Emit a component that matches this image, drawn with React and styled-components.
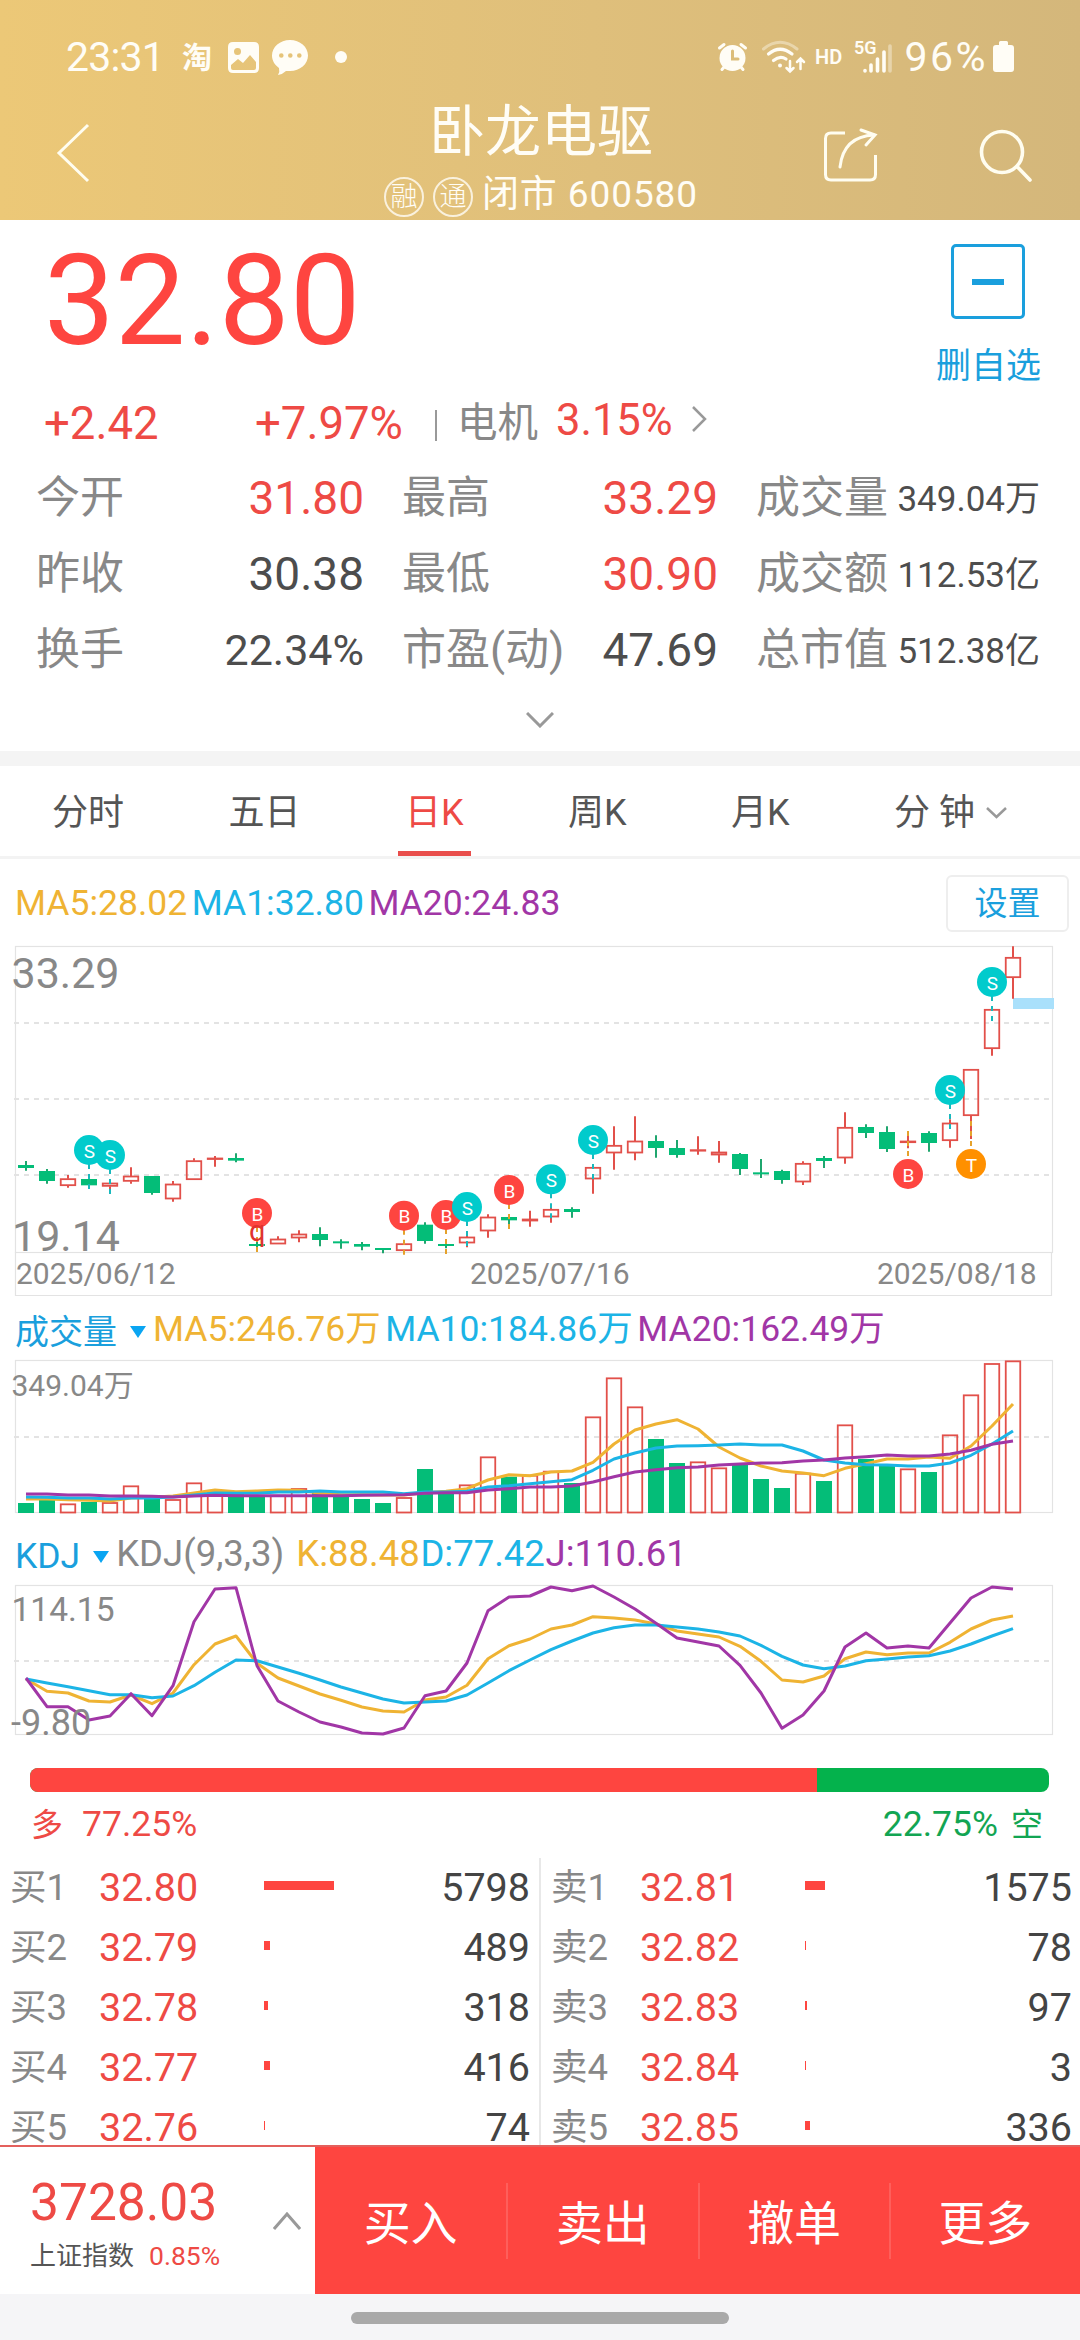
import React, {useState} from 'react';
import styled, {createGlobalStyle} from 'styled-components';

const GlobalStyle = createGlobalStyle`
    * {
        box-sizing: border-box;
    }

    body {
        margin: 0;
        background: #fff;
        font-family: Roboto, "Noto Sans CJK SC", sans-serif;
        line-height: 1;
    }
`;

const RED = '#fe4540';
const TEXT_RED = '#ee4a45';
const GREEN = '#04bd78';
const BLUE = '#1a9fdd';
const YELLOW = '#efb333';
const CYAN = '#1cb4e6';
const PURPLE = '#a136a6';

const Page = styled.div`
    width: 1080px;
    height: 2340px;
    display: flex;
    flex-direction: column;
    overflow: hidden;
    background: #fff;
    white-space: nowrap;
`;

/* header */

const Header = styled.header`
    height: 220px;
    flex: none;
    padding-top: 25px;
    color: #fffdf6;
    background: linear-gradient(90deg, #ecc877 0%, #dfbf7b 55%, #d4b77b 100%);
`;

const StatusBar = styled.div`
    height: 64px;
    display: flex;
    align-items: center;
    justify-content: space-between;
    padding: 0 66px 0 66px;
`;

const StatusGroup = styled.div`
    display: flex;
    align-items: center;
`;

const StatusText = styled.span`
    margin-right: ${props => props.$gap || 0}px;
    font-family: Roboto, sans-serif;
    font-size: 41px;
    letter-spacing: ${props => props.$spacing || 0}px;
`;

const AppMark = styled.span`
    width: 45px;
    padding: 2px 0 0 1px;
    font-size: 30px;
    font-weight: 700;
`;

const NavBar = styled.div`
    height: 131px;
    display: grid;
    grid-template-columns: 320px 440px 320px;
    align-items: center;
`;

const BackButton = styled.div`
    padding-left: 54px;
`;

const NavActions = styled.div`
    display: flex;
    align-items: center;
    gap: 101px;
    padding-left: 62px;
`;

const TitleBox = styled.div`
    height: 131px;
    display: flex;
    flex-direction: column;
    align-items: center;
    padding: 15px 0 0 2px;
`;

const StockName = styled.div`
    font-size: 56px;
`;

const StockStatus = styled.div`
    display: flex;
    align-items: center;
    margin-top: 11px;
    font-size: 37px;
    letter-spacing: 0.9px;
`;

const RoundTag = styled.span`
    width: 40px;
    height: 40px;
    display: flex;
    align-items: center;
    justify-content: center;
    margin: 6px 9px 0 0;
    border: 2px solid rgba(255, 253, 246, 0.8);
    border-radius: 50%;
    font-size: 27px;
    font-weight: 300;
    letter-spacing: 0;
`;

/* quote */

const Quote = styled.section`
    height: 531px;
    flex: none;
`;

const QuoteTop = styled.div`
    height: 175px;
    display: flex;
    justify-content: space-between;
    padding: 18px 39px 0 44px;
`;

const Price = styled.div`
    font-size: 126px;
    line-height: 127px;
    color: ${RED};
`;

const Watch = styled.div`
    display: flex;
    flex-direction: column;
    align-items: center;
    padding-top: 6px;
    font-size: 35px;
    color: ${BLUE};
`;

const WatchIcon = styled.div`
    width: 74px;
    height: 75px;
    display: flex;
    align-items: center;
    justify-content: center;
    margin-bottom: 30px;
    border: 3px solid ${BLUE};
    border-radius: 5px;

    &::after {
        content: "";
        width: 32px;
        height: 6px;
        background: ${BLUE};
    }
`;

const ChangeRow = styled.div`
    height: 57px;
    display: flex;
    align-items: center;
    padding-left: 44px;
    color: ${TEXT_RED};
`;

const ChangeValue = styled.span`
    width: ${props => props.$width}px;
    font-size: 45.5px;
`;

const Sector = styled.div`
    display: flex;
    align-items: center;
    color: #888;

    &::before {
        content: "";
        width: 2px;
        height: 31px;
        margin: 3px 20px 0 0;
        background: #999;
    }
`;

const SectorName = styled.span`
    font-size: 40.5px;
`;

const SectorChange = styled.span`
    margin: -6px 18px 0 18px;
    font-size: 43.5px;
    color: ${TEXT_RED};
`;

const SectorArrow = styled.span`
    height: 26px;
    margin-top: -10px;
`;

const StatGrid = styled.div`
    display: grid;
    grid-template-columns: 328px 316px 284px;
    grid-auto-rows: 76px;
    column-gap: 38px;
    padding: 8px 0 0 36px;
`;

const Stat = styled.div`
    display: flex;
    align-items: center;
    justify-content: space-between;
`;

const StatLabel = styled.span`
    font-size: 44px;
    color: #888;
`;

const StatValue = styled.span`
    padding-top: ${props => props.$small ? 3 : 0}px;
    font-size: ${props => props.$size || 46}px;
    color: ${props => props.$up ? TEXT_RED : '#4d4d4d'};
`;

const Expand = styled.div`
    display: flex;
    justify-content: center;
    padding-top: 24px;
`;

const Band = styled.div`
    height: 15px;
    flex: none;
    background: #f4f4f4;
`;

/* period tabs */

const Tabs = styled.nav`
    height: 93px;
    flex: none;
    display: flex;
    justify-content: space-between;
    padding: 0 73px 0 52px;
    border-bottom: 3px solid #f3f3f3;
`;

const Tab = styled.div`
    display: flex;
    align-items: center;
    gap: 11px;
    margin: 0 -7px;
    padding: 9px 7px 0;
    font-size: 36px;
    color: ${props => props.$active ? TEXT_RED : '#555'};
    border-bottom: 5px solid ${props => props.$active ? '#e94e4c' : 'transparent'};
`;

/* charts */

const LegendRow = styled.div`
    height: ${props => props.$height}px;
    flex: none;
    display: flex;
    align-items: center;
    padding: ${props => props.$top || 0}px 11px 0 15px;
    font-size: ${props => props.$size || 35.5}px;
`;

const Legend = styled.span`
    margin-right: ${props => props.$gap}px;
    color: ${props => props.$color};
`;

const SettingButton = styled.button`
    width: 123px;
    height: 57px;
    margin-left: auto;
    padding: 0;
    border: 2px solid #eee;
    border-radius: 6px;
    background: #fff;
    font: inherit;
    font-size: 33px;
    color: ${BLUE};
`;

const IndicatorName = styled.span`
    display: flex;
    align-items: center;
    gap: 13px;
    padding-top: ${props => props.$top}px;
    margin-right: 7px;
    font-size: ${props => props.$size}px;
    color: ${BLUE};
`;

const ChartSvg = styled.svg`
    display: block;
    flex: none;
    font-family: Roboto, "Noto Sans CJK SC", sans-serif;
`;

/* long / short ratio */

const RatioBar = styled.div`
    height: 24px;
    flex: none;
    display: flex;
    margin: 18px 31px 0 30px;
    border-radius: 8px;
    overflow: hidden;
    background: #04b24c;
`;

const RatioFill = styled.div`
    background: ${RED};
`;

const RatioLabels = styled.div`
    height: 66px;
    flex: none;
    display: flex;
    align-items: center;
    justify-content: space-between;
    padding: 0 37px 0 31px;
    font-size: 35.5px;
`;

const RatioLabel = styled.div`
    display: flex;
    align-items: center;
    gap: ${props => props.$gap}px;
    color: ${props => props.$color};
`;

const RatioSide = styled.span`
    font-size: 32px;
`;

/* order book */

const OrderBook = styled.section`
    height: 287px;
    flex: none;
    display: grid;
    grid-template-columns: 541px 539px;
    overflow: hidden;
`;

const BookSide = styled.div`
    height: 300px;
    border-right: ${props => props.$divider ? '2px solid #e8e8e8' : 'none'};
`;

const BookRow = styled.div`
    height: 60px;
    display: grid;
    grid-template-columns: 89px 165px 1fr auto;
    align-items: center;
    padding: 0 ${props => props.$right}px 0 10px;
    font-size: 39.5px;
`;

const Level = styled.span`
    font-size: 36.5px;
    color: #888;
`;

const BookPrice = styled.span`
    color: ${TEXT_RED};
`;

const DepthBar = styled.span`
    height: 9px;
    margin-top: -5px;
    background: ${RED};
`;

const Amount = styled.span`
    color: #444;
`;

/* bottom bar */

const BottomBar = styled.footer`
    height: 149px;
    flex: none;
    display: flex;
    border-top: 2px solid #e4605c;
    background: ${RED};
`;

const IndexPanel = styled.div`
    width: 315px;
    display: flex;
    align-items: center;
    justify-content: space-between;
    padding: 0 14px 0 30px;
    background: #fff;
`;

const IndexInfo = styled.div`
    padding-top: 5px;
`;

const IndexValue = styled.div`
    margin-bottom: 14px;
    font-size: 51.5px;
    color: ${TEXT_RED};
`;

const IndexName = styled.div`
    display: flex;
    align-items: center;
    gap: 15px;
    font-size: 26px;
    color: #555;
`;

const IndexChange = styled.span`
    font-size: 26.5px;
    color: ${TEXT_RED};
`;

const Actions = styled.div`
    flex: 1;
    display: grid;
    grid-template-columns: repeat(4, 1fr);
    align-items: center;
`;

const Action = styled.div`
    height: 76px;
    display: flex;
    align-items: center;
    justify-content: center;
    padding-top: 5px;
    font-size: 47px;
    color: #fff;

    & + & {
        border-left: 2px solid rgba(255, 255, 255, 0.14);
    }
`;

const GestureArea = styled.div`
    height: 46px;
    flex: none;
    display: flex;
    justify-content: center;
    padding-top: 18px;
    background: #f5f5f7;

    &::after {
        content: "";
        width: 378px;
        height: 12px;
        border-radius: 6px;
        background: #a9a9a9;
    }
`;

/* [rising, high, top, bottom, low], three units to a pixel */
const CANDLES = [
    [0, 693, 705, 714, 722], [0, 717, 723, 753, 761], [1, 735, 746, 767, 773], [0, 740, 747, 766, 772],
    [1, 757, 759, 769, 777], [1, 712, 738, 754, 761], [0, 738, 738, 789, 794], [1, 753, 762, 807, 815],
    [1, 685, 692, 749, 749], [1, 678, 684, 688, 710], [0, 670, 684, 692, 697], [0, 936, 942, 948, 952],
    [1, 919, 927, 942, 942], [1, 901, 912, 924, 937], [0, 892, 912, 930, 949], [0, 928, 934, 939, 956],
    [0, 936, 942, 950, 961], [0, 954, 954, 960, 970], [1, 933, 941, 962, 968], [0, 877, 884, 933, 941],
    [0, 930, 942, 947, 955], [1, 912, 921, 939, 952], [1, 853, 861, 903, 923], [0, 858, 861, 871, 885],
    [1, 842, 867, 873, 890], [1, 830, 838, 861, 878], [0, 832, 837, 846, 863], [1, 708, 712, 747, 791],
    [1, 589, 646, 669, 719], [1, 559, 633, 669, 691], [0, 616, 633, 654, 683], [0, 630, 654, 675, 683],
    [1, 619, 659, 663, 674], [1, 633, 666, 675, 698], [0, 669, 672, 717, 735], [0, 687, 727, 732, 744],
    [0, 719, 723, 750, 761], [1, 694, 700, 756, 765], [0, 678, 684, 693, 714], [1, 547, 592, 684, 701],
    [0, 583, 591, 609, 624], [0, 589, 606, 657, 666], [1, 608, 633, 638, 655], [0, 604, 609, 639, 665],
    [1, 568, 579, 632, 653], [1, 418, 418, 557, 627], [1, 232, 238, 356, 377], [1, 49, 82, 143, 206]
];

const MARKERS = [
    {at: 3, y: 660, type: 'S'},
    {at: 4, y: 675, type: 'S'},
    {at: 11, y: 849, type: 'B'},
    {at: 18, y: 857, type: 'B'},
    {at: 20, y: 855, type: 'B'},
    {at: 21, y: 831, type: 'S'},
    {at: 23, y: 780, type: 'B'},
    {at: 25, y: 748, type: 'S'},
    {at: 27, y: 630, type: 'S'},
    {at: 42, y: 732, type: 'B', below: true},
    {at: 44, y: 480, type: 'S'},
    {at: 45, y: 702, type: 'T', below: true},
    {at: 46, y: 156, type: 'S'}
];

const MARKER_COLORS = {S: '#01cbcc', B: RED, T: '#ff9000'};

const VOLUME_TOPS = [
    609, 597, 613, 606, 609, 559, 597, 600, 550, 577, 580, 585, 587, 567, 578, 588,
    597, 609, 594, 507, 577, 556, 472, 530, 527, 515, 549, 352, 235, 322, 417, 489,
    487, 505, 495, 537, 564, 521, 543, 376, 477, 495, 508, 516, 406, 286, 192, 184
];

const VOLUME_LINES = [
    {
        color: YELLOW,
        points: [597, 597, 599, 601, 603, 594, 592, 588, 579, 570, 575, 573, 570, 571, 580, 584,
            584, 585, 585, 578, 574, 566, 540, 524, 527, 516, 513, 487, 432, 390, 372, 359,
            387, 441, 474, 498, 513, 519, 527, 505, 491, 477, 477, 471, 475, 438, 378, 312]
    },
    {
        color: CYAN,
        points: [591, 592, 594, 594, 597, 594, 594, 591, 585, 579, 580, 580, 576, 576, 573, 576,
            576, 576, 581, 576, 576, 574, 561, 557, 551, 545, 539, 511, 477, 459, 444, 438,
            437, 435, 432, 435, 435, 453, 480, 489, 494, 495, 498, 498, 489, 466, 432, 393]
    },
    {
        color: PURPLE,
        points: [582, 582, 585, 585, 588, 588, 589, 591, 588, 586, 587, 587, 587, 587, 587, 587,
            586, 585, 584, 580, 578, 578, 570, 566, 561, 561, 558, 546, 530, 516, 509, 503,
            501, 495, 492, 489, 488, 483, 480, 474, 470, 465, 468, 468, 462, 451, 433, 423]
    }
];

const KDJ_LINES = [
    {
        color: YELLOW,
        points: [477, 514, 519, 543, 546, 525, 551, 519, 434, 372, 348, 430, 474, 498, 522, 541,
            561, 573, 576, 540, 531, 496, 416, 377, 357, 327, 315, 290, 294, 300, 312, 333,
            342, 351, 379, 424, 480, 486, 468, 416, 396, 404, 399, 399, 367, 327, 300, 288]
    },
    {
        color: CYAN,
        points: [477, 489, 500, 512, 524, 524, 533, 528, 497, 457, 420, 422, 441, 460, 480, 501,
            519, 537, 549, 546, 543, 525, 489, 452, 420, 389, 363, 339, 323, 315, 315, 321,
            327, 336, 348, 376, 409, 435, 446, 438, 422, 417, 411, 407, 393, 372, 348, 326]
    },
    {
        color: PURPLE,
        points: [474, 560, 560, 600, 588, 521, 587, 497, 305, 207, 203, 437, 543, 576, 606, 621,
            639, 642, 624, 527, 513, 429, 272, 231, 228, 201, 212, 198, 231, 267, 310, 354,
            366, 378, 436, 519, 625, 585, 513, 381, 339, 384, 378, 384, 309, 234, 201, 207]
    }
];

const BUY = [
    ['买1', '32.80', 70, '5798'],
    ['买2', '32.79', 6, '489'],
    ['买3', '32.78', 4, '318'],
    ['买4', '32.77', 6, '416'],
    ['买5', '32.76', 1, '74']
];

const SELL = [
    ['卖1', '32.81', 20, '1575'],
    ['卖2', '32.82', 1, '78'],
    ['卖3', '32.83', 2, '97'],
    ['卖4', '32.84', 1, '3'],
    ['卖5', '32.85', 5, '336']
];

const STATS = [
    {label: '今开', value: '31.80', up: true},
    {label: '最高', value: '33.29', up: true},
    {label: '成交量', value: '349.04万', size: 35, small: true},
    {label: '昨收', value: '30.38'},
    {label: '最低', value: '30.90', up: true},
    {label: '成交额', value: '112.53亿', size: 35, small: true},
    {label: '换手', value: '22.34%', size: 43},
    {label: '市盈(动)', value: '47.69'},
    {label: '总市值', value: '512.38亿', size: 35, small: true}
];

const TABS = ['分时', '五日', '日K', '周K', '月K', '分 钟'];

const px = (index) => 26 + index * 21;
const py = (value) => value / 3;

const Chevron = ({width, height, points, color = '#999', stroke = 2.5}) => {
    return (
        <svg width={width} height={height} viewBox={`0 0 ${width} ${height}`}>
            <polyline points={points} fill="none" stroke={color} strokeWidth={stroke}/>
        </svg>
    );
};

const Triangle = () => {
    return (
        <svg width="16" height="12" viewBox="0 0 16 12">
            <path d="M0 0H16L8 12Z" fill="#0aa5f2"/>
        </svg>
    );
};

const NoticeIcons = () => {
    return (
        <svg width="122" height="40" viewBox="226 38 122 40" fill="#fffdf6">
            <path fillRule="evenodd"
                  d="M233 43H254Q259 43 259 48V69Q259 74 254 74H233Q228 74 228 69V48Q228 43 233 43ZM234 52.500A3.500 3.500 0 1 0 241 52.500A3.500 3.500 0 1 0 234 52.500ZM231 66V69Q231 71 233 71H254Q256 71 256 69V63L250 56L243 64L238 60Z"/>
            <path fillRule="evenodd"
                  d="M290 41C300 41 308 48 308 56.500C308 65 300 72 290 72H286Q283 75 278 76Q280 73 279 69C275 66 272 62 272 56.500C272 48 280 41 290 41ZM279 56.500a2.300 2.300 0 1 0 4.600 0a2.300 2.300 0 1 0 -4.600 0ZM288 56.500a2.300 2.300 0 1 0 4.600 0a2.300 2.300 0 1 0 -4.600 0ZM297 56.500a2.300 2.300 0 1 0 4.600 0a2.300 2.300 0 1 0 -4.600 0Z"/>
            <circle cx="341" cy="58" r="6"/>
        </svg>
    );
};

const SignalIcons = () => {
    return (
        <svg width="188" height="40" viewBox="714 38 188 40" fill="none" stroke="#fffdf6" strokeLinecap="round">
            <circle cx="730.500" cy="59" r="13" fill="#fffdf6" stroke="none"/>
            <path d="M717.500 49L722 45.500M743.500 49L739 45.500M720 70.500L723 67M741 70.500L738 67" strokeWidth="3"/>
            <path d="M730.500 52V60H736" stroke="#dcbd7a" strokeWidth="3"/>
            <path d="M761.500 50Q778 36.500 795 50" strokeWidth="3" opacity="0.4"/>
            <path d="M766.500 55Q778 45.500 790 55" strokeWidth="3.200"/>
            <path d="M771.500 61.500Q778 56 784 60" strokeWidth="3.200"/>
            <circle cx="778" cy="66.500" r="2" fill="#fffdf6" stroke="none"/>
            <path d="M788 62V72M784.500 69L788 72.500L791.500 69M798.500 70V60M795 63L798.500 59.500L802 63" strokeWidth="2.500"/>
            <text x="813" y="65" fill="#fffdf6" stroke="none" fontFamily="Roboto" fontSize="20" fontWeight="600">HD</text>
            <text x="852" y="55" fill="#fffdf6" stroke="none" fontFamily="Roboto" fontSize="18" fontWeight="600">5G</text>
            <path d="M863 72V71.500M869 72V66M875.500 72V60M882 72V53" strokeWidth="3.600"/>
            <path d="M888 72V47" strokeWidth="3.600" opacity="0.4"/>
        </svg>
    );
};

const BatteryIcon = () => {
    return (
        <svg width="21" height="32" viewBox="0 0 21 32" fill="#fffdf6">
            <path d="M6 1.500Q6 0 7.500 0H13.500Q15 0 15 1.500V4H18Q21 4 21 7V28Q21 31 18 31H3Q0 31 0 28V7Q0 4 3 4H6Z"/>
        </svg>
    );
};

const ShareIcon = () => {
    return (
        <svg width="56" height="58" viewBox="0 1 56 58" fill="none" stroke="#fffdf0" strokeWidth="3">
            <path d="M23 8H9Q3.500 8 3.500 13.500V49.500Q3.500 55 9 55H48Q53.500 55 53.500 49.500V30"/>
            <path d="M18 42C20 24 30 11 52 10" strokeLinecap="round"/>
            <path d="M39 5L53 10L44 20" strokeLinecap="round"/>
        </svg>
    );
};

const SearchIcon = () => {
    return (
        <svg width="54" height="56" viewBox="0 -1 54 56" fill="none" stroke="#fffdf0" strokeWidth="3.600" strokeLinecap="round">
            <circle cx="23" cy="24" r="20.500"/>
            <path d="M38 38.500L51 52"/>
        </svg>
    );
};

const TopBar = () => {
    return (
        <Header>
            <StatusBar>
                <StatusGroup>
                    <StatusText $spacing={-0.8} $gap={17}>23:31</StatusText>
                    <AppMark>淘</AppMark>
                    <NoticeIcons/>
                </StatusGroup>
                <StatusGroup>
                    <SignalIcons/>
                    <StatusText $spacing={2.5} $gap={5}>96%</StatusText>
                    <BatteryIcon/>
                </StatusGroup>
            </StatusBar>
            <NavBar>
                <BackButton>
                    <Chevron width={36} height={60} points="34,2 5,30 34,58" color="#fffdf0" stroke={3}/>
                </BackButton>
                <TitleBox>
                    <StockName>卧龙电驱</StockName>
                    <StockStatus>
                        <RoundTag>融</RoundTag>
                        <RoundTag>通</RoundTag>
                        闭市 600580
                    </StockStatus>
                </TitleBox>
                <NavActions>
                    <ShareIcon/>
                    <SearchIcon/>
                </NavActions>
            </NavBar>
        </Header>
    );
};

const QuotePanel = () => {
    return (
        <Quote>
            <QuoteTop>
                <Price>32.80</Price>
                <Watch>
                    <WatchIcon/>
                    删自选
                </Watch>
            </QuoteTop>
            <ChangeRow>
                <ChangeValue $width={211}>+2.42</ChangeValue>
                <ChangeValue $width={180}>+7.97%</ChangeValue>
                <Sector>
                    <SectorName>电机</SectorName>
                    <SectorChange>3.15%</SectorChange>
                    <SectorArrow>
                        <Chevron width={16} height={26} points="2,1 14,13 2,25"/>
                    </SectorArrow>
                </Sector>
            </ChangeRow>
            <StatGrid>
                {STATS.map(stat => (
                    <Stat key={stat.label}>
                        <StatLabel>{stat.label}</StatLabel>
                        <StatValue $up={stat.up} $size={stat.size} $small={stat.small}>{stat.value}</StatValue>
                    </Stat>
                ))}
            </StatGrid>
            <Expand>
                <Chevron width={28} height={16} points="1,1 14,14 27,1" stroke={3}/>
            </Expand>
        </Quote>
    );
};

const Marker = ({at, y, type, below}) => {
    const x = px(at);
    const cy = py(y);
    const stem = type === 'S' ? '#19b9bd' : '#e5a22c';

    return (
        <g>
            <line
                x1={x} x2={x}
                y1={below ? cy - 43 : cy + 14}
                y2={below ? cy - 14 : cy + 39}
                stroke={stem} strokeWidth="2" strokeDasharray="5 5"
            />
            <circle cx={x} cy={cy} r="15" fill={MARKER_COLORS[type]}/>
            <text x={x + 0.5} y={cy + 7.5} fontSize="19" textAnchor="middle" fill="#fff">{type}</text>
        </g>
    );
};

const Candle = ({index, data}) => {
    const [rising, high, top, bottom, low] = data;
    const x = px(index);
    const height = py(bottom - top);

    if (!rising) {
        return (
            <g>
                <line x1={x} x2={x} y1={py(high)} y2={py(low)} stroke="#1fa66e" strokeWidth="2"/>
                <rect x={x - 8} y={py(top)} width="16" height={Math.max(height, 2)} fill={GREEN}/>
            </g>
        );
    }

    return (
        <g stroke="#e2504a">
            <line x1={x} x2={x} y1={py(high)} y2={py(top)} strokeWidth="2"/>
            <line x1={x} x2={x} y1={py(bottom)} y2={py(low)} strokeWidth="2"/>
            <rect
                x={x - 7.25} y={py(top) + 0.5} width="14.5" height={Math.max(height - 1, 0.5)}
                fill="none" strokeWidth="1.8"
            />
        </g>
    );
};

const Grid = ({top, bottom, lines}) => {
    return (
        <g fill="none" stroke="#e3e3e3">
            <rect x="15.5" y={top} width="1037" height={bottom - top} strokeWidth="1.2"/>
            {lines.map(y => (
                <line key={y} x1="14" x2="1049" y1={y} y2={y} strokeWidth="1.8" strokeDasharray="5 5"/>
            ))}
        </g>
    );
};

const Lines = ({lines}) => {
    return lines.map(line => (
        <polyline
            key={line.color}
            points={line.points.map((value, i) => `${px(i)},${py(value).toFixed(1)}`).join(' ')}
            fill="none" stroke={line.color} strokeWidth="3" strokeLinejoin="round"
        />
    ));
};

const PriceChart = () => {
    return (
        <ChartSvg width="1080" height="354" viewBox="0 14 1080 354">
            <Grid top={16.5} bottom={322.5} lines={[93, 169, 245]}/>
            <path d="M15.5 322V365.5H1051.5V322" fill="none" stroke="#e3e3e3" strokeWidth="1.2"/>
            <text x="11.500" y="58" fontSize="43" fill="#888">33.29</text>
            <text x="12" y="320.500" fontSize="43" fill="#888">19.14</text>
            <g fontSize="30" fill="#888">
                <text x="16" y="353.500">2025/06/12</text>
                <text x="470" y="353.500">2025/07/16</text>
                <text x="877" y="353.500">2025/08/18</text>
            </g>
            <rect x="1013" y="68" width="41" height="11" fill="#a9e0fb"/>
            {CANDLES.map((data, i) => <Candle key={i} index={i} data={data}/>)}
            {MARKERS.map(marker => <Marker key={marker.at} {...marker}/>)}
            <text x="249" y="311" fontSize="29" fill="#e0332f">q</text>
        </ChartSvg>
    );
};

const VolumeChart = () => {
    return (
        <ChartSvg width="1080" height="166" viewBox="0 58 1080 166">
            <Grid top={60.5} bottom={212.5} lines={[137]}/>
            <text x="11.500" y="96" fontSize="30" fill="#888">349.04万</text>
            {VOLUME_TOPS.map((top, i) => {
                const x = px(i);
                const y = py(top);

                return CANDLES[i][0] ? (
                    <rect key={i} x={x - 7.25} y={y} width="14.5" height={212.5 - y}
                          fill="none" stroke="#e2504a" strokeWidth="1.8"/>
                ) : (
                    <rect key={i} x={x - 8} y={y} width="16" height={213 - y} fill={GREEN}/>
                );
            })}
            <Lines lines={VOLUME_LINES}/>
        </ChartSvg>
    );
};

const KdjChart = () => {
    return (
        <ChartSvg width="1080" height="166" viewBox="0 64 1080 166">
            <Grid top={65.5} bottom={214.5} lines={[141]}/>
            <Lines lines={KDJ_LINES}/>
            <text x="11.500" y="101" fontSize="33.500" fill="#888">114.15</text>
            <text x="11" y="214.500" fontSize="36" fill="#888">-9.80</text>
        </ChartSvg>
    );
};

const BookList = ({rows, right, divider}) => {
    return (
        <BookSide $divider={divider}>
            {rows.map(([level, price, depth, amount]) => (
                <BookRow key={level} $right={right}>
                    <Level>{level}</Level>
                    <BookPrice>{price}</BookPrice>
                    <DepthBar style={{width: depth}}/>
                    <Amount>{amount}</Amount>
                </BookRow>
            ))}
        </BookSide>
    );
};

const TradeBar = () => {
    return (
        <BottomBar>
            <IndexPanel>
                <IndexInfo>
                    <IndexValue>3728.03</IndexValue>
                    <IndexName>上证指数 <IndexChange>0.85%</IndexChange></IndexName>
                </IndexInfo>
                <Chevron width={28} height={18} points="1,17 14,2 27,17" stroke={3}/>
            </IndexPanel>
            <Actions>
                <Action>买入</Action>
                <Action>卖出</Action>
                <Action>撤单</Action>
                <Action>更多</Action>
            </Actions>
        </BottomBar>
    );
};

const App = () => {
    const [tab, setTab] = useState('日K');

    return (
        <Page>
            <GlobalStyle/>
            <TopBar/>
            <QuotePanel/>
            <Band/>
            <Tabs>
                {TABS.map(name => (
                    <Tab key={name} $active={tab === name} onClick={() => setTab(name)}>
                        {name}
                        {name === '分 钟' && <Chevron width={21} height={12} points="1,1 10.5,10 20,1"/>}
                    </Tab>
                ))}
            </Tabs>

            <LegendRow $height={85} $top={4}>
                <Legend $color={YELLOW} $gap={4.5}>MA5:28.02</Legend>
                <Legend $color={CYAN} $gap={4.5}>MA1:32.80</Legend>
                <Legend $color={PURPLE}>MA20:24.83</Legend>
                <SettingButton>设置</SettingButton>
            </LegendRow>
            <PriceChart/>

            <LegendRow $height={60} $top={4}>
                <IndicatorName $size={34} $top={4}>成交量 <Triangle/></IndicatorName>
                <Legend $color={YELLOW} $gap={4.5}>MA5:246.76万</Legend>
                <Legend $color={CYAN} $gap={4.5}>MA10:184.86万</Legend>
                <Legend $color={PURPLE}>MA20:162.49万</Legend>
            </LegendRow>
            <VolumeChart/>

            <LegendRow $height={60} $top={1} $size={36.5}>
                <IndicatorName $size={35.5} $top={5}>KDJ <Triangle/></IndicatorName>
                <Legend $color="#888" $gap={12}>KDJ(9,3,3)</Legend>
                <Legend $color={YELLOW} $gap={0.7}>K:88.48</Legend>
                <Legend $color={CYAN} $gap={0.7}>D:77.42</Legend>
                <Legend $color={PURPLE}>J:110.61</Legend>
            </LegendRow>
            <KdjChart/>

            <RatioBar>
                <RatioFill style={{width: '77.25%'}}/>
            </RatioBar>
            <RatioLabels>
                <RatioLabel $color={TEXT_RED} $gap={19}><RatioSide>多</RatioSide>77.25%</RatioLabel>
                <RatioLabel $color="#12a553" $gap={13}>22.75%<RatioSide>空</RatioSide></RatioLabel>
            </RatioLabels>

            <OrderBook>
                <BookList rows={BUY} right={9} divider/>
                <BookList rows={SELL} right={8}/>
            </OrderBook>

            <TradeBar/>
            <GestureArea/>
        </Page>
    );
};

export default App;
